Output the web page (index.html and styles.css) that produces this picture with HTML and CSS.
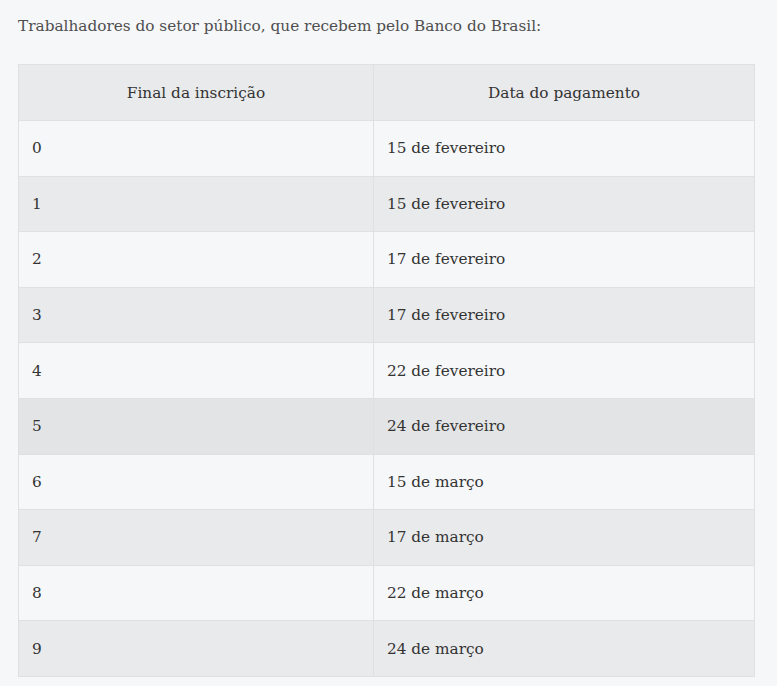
FILE: index.html
```html
<!DOCTYPE html>
<html lang="pt">
<head>
<meta charset="utf-8">
<link rel="stylesheet" href="styles.css">
</head>
<body>
<div class="page">
  <p class="intro">Trabalhadores do setor público, que recebem pelo Banco do Brasil:</p>
  <table class="pay">
    <thead>
      <tr><th class="c1">Final da inscrição</th><th class="c2">Data do pagamento</th></tr>
    </thead>
    <tbody>
      <tr><td>0</td><td>15 de fevereiro</td></tr>
      <tr><td>1</td><td>15 de fevereiro</td></tr>
      <tr><td>2</td><td>17 de fevereiro</td></tr>
      <tr><td>3</td><td>17 de fevereiro</td></tr>
      <tr><td>4</td><td>22 de fevereiro</td></tr>
      <tr class="hover"><td>5</td><td>24 de fevereiro</td></tr>
      <tr><td>6</td><td>15 de março</td></tr>
      <tr><td>7</td><td>17 de março</td></tr>
      <tr><td>8</td><td>22 de março</td></tr>
      <tr><td>9</td><td>24 de março</td></tr>
    </tbody>
  </table>
</div>
</body>
</html>
```

FILE: styles.css
```css
html, body {
  margin: 0;
  padding: 0;
  background: #f6f7f9;
}
.page {
  padding: 14px 22px 0 18px;
  font-family: "DejaVu Serif", "Liberation Serif", serif;
  color: #3a3a3a;
}
.intro {
  margin: 0 0 26px 0;
  font-size: 15.3px;
  line-height: 24px;
  color: #4f4f4f;
}
.pay {
  width: 737px;
  border-collapse: collapse;
  font-size: 15.3px;
  color: #333;
}
.pay th, .pay td {
  border: 1px solid #dfe0e2;
  height: 55.6px;
  padding: 0 13px;
  box-sizing: border-box;
  text-align: left;
  font-weight: normal;
}
.pay th {
  text-align: center;
  background: #e9eaec;
  height: 56px;
}
.pay .c1 { width: 355px; }
.pay tbody tr:nth-child(odd) { background: #f6f7f9; }
.pay tbody tr:nth-child(even) { background: #e9eaec; }
.pay tbody tr.hover { background: #e3e4e5; }
```
